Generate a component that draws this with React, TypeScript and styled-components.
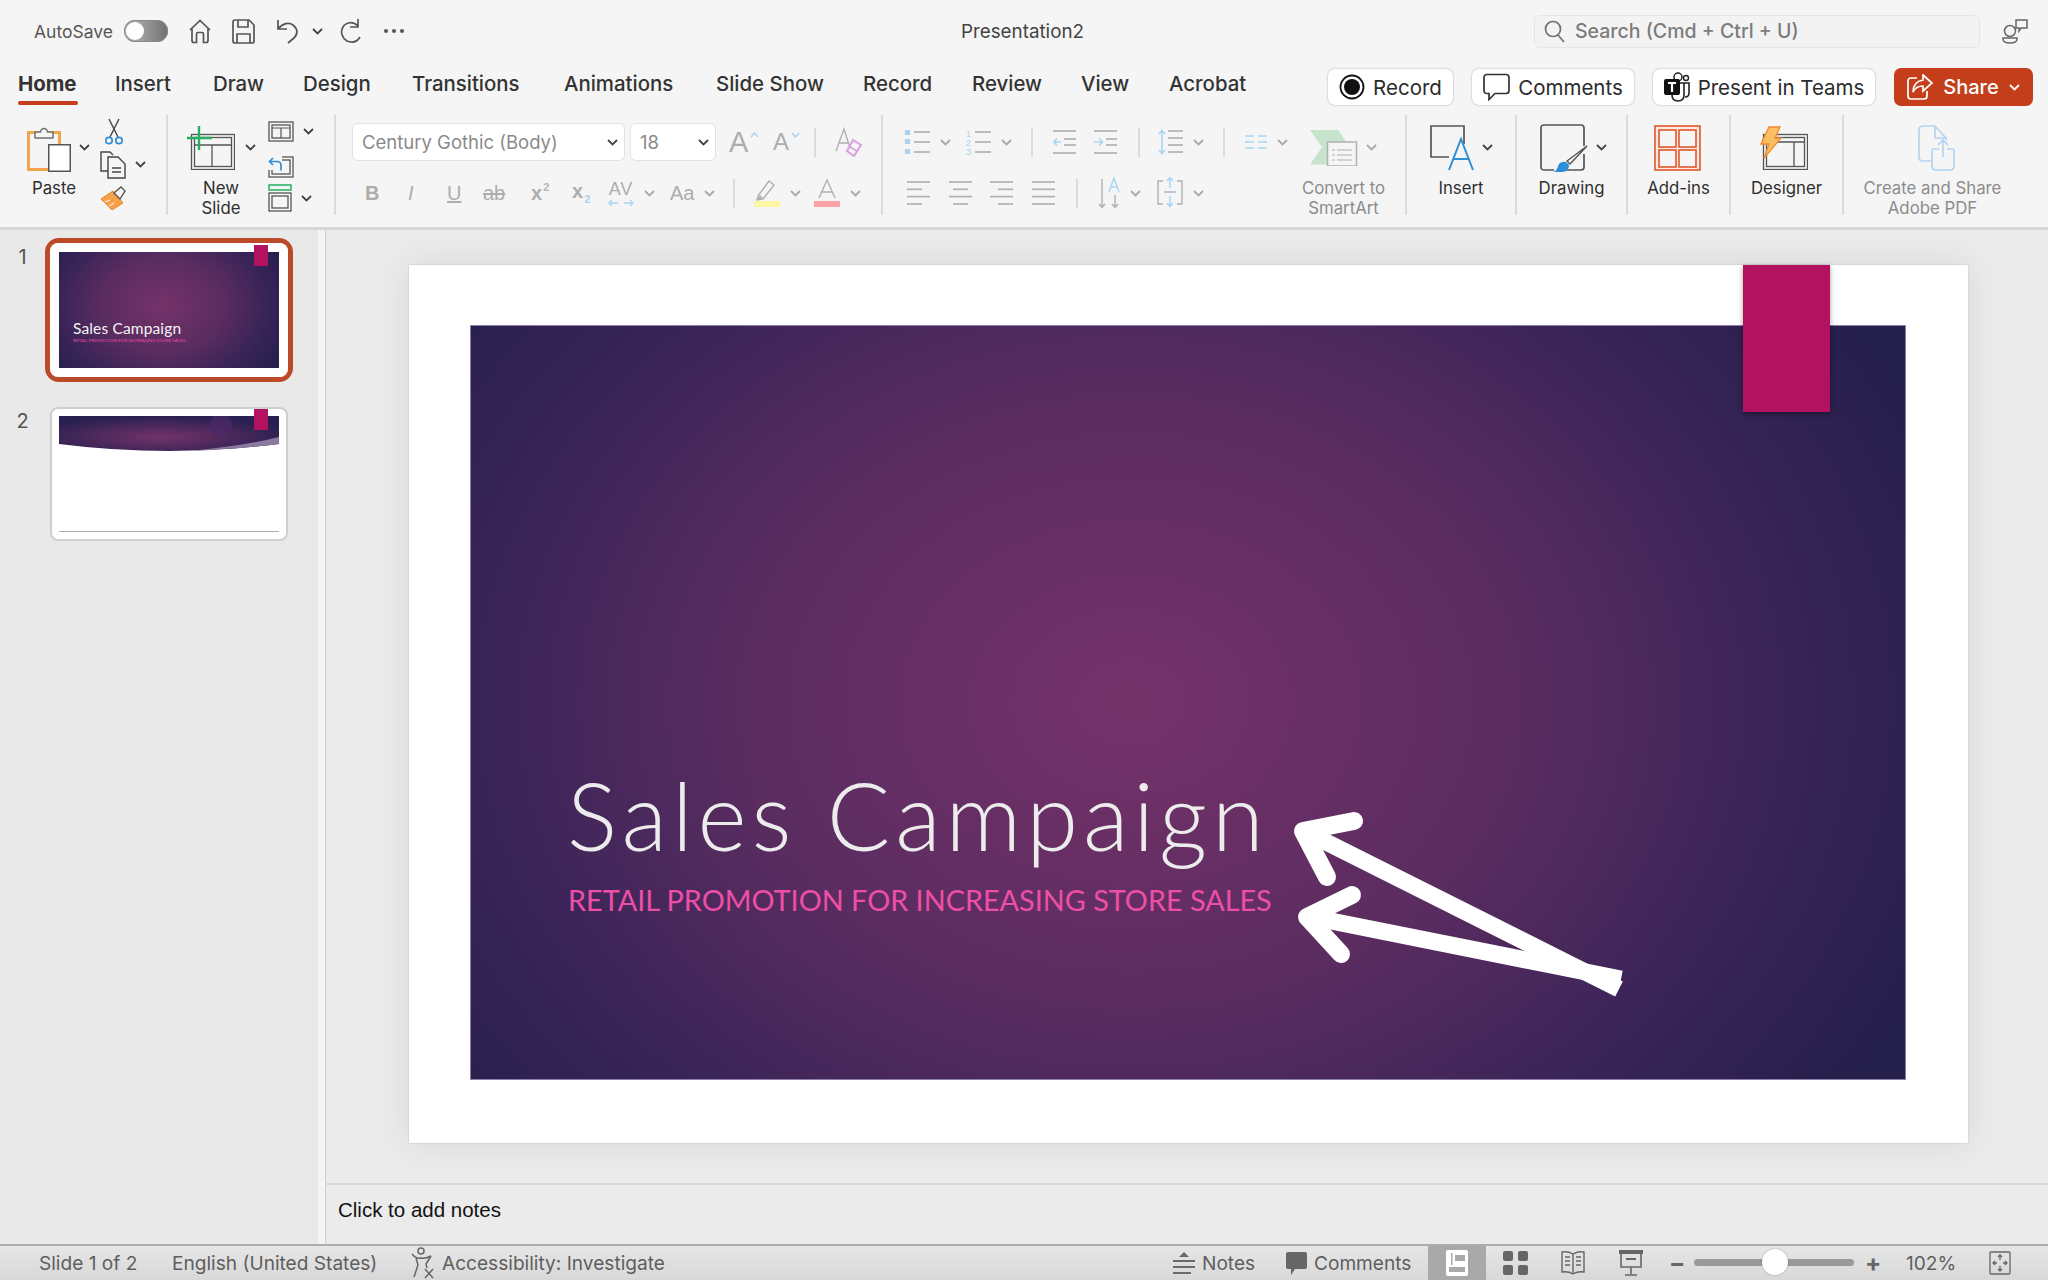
import type { ReactNode } from "react";
import styled, { createGlobalStyle } from "styled-components";

const GlobalStyle = createGlobalStyle`
  html, body { margin: 0; padding: 0; background: #f5f5f5; overflow: hidden; }
  * { box-sizing: border-box; }
`;

const Page = styled.div`
  width: 2048px;
  height: 1280px;
  display: flex;
  flex-direction: column;
  font-family: Inter, "Liberation Sans", sans-serif;
  color: #333;
  background: #f5f5f5;
`;

/* ---------- title bar ---------- */
const TitleBar = styled.div`
  height: 62px;
  display: flex;
  align-items: center;
  padding-left: 34px;
  position: relative;
`;
const AutoSave = styled.span`
  font-size: 17.5px;
  color: #555;
  width: 90px;
`;
const Toggle = styled.span`
  width: 44px;
  height: 22px;
  border-radius: 11px;
  background: linear-gradient(90deg, #bdbdbd, #707070);
  padding: 2px;
  margin-right: 20px;
  box-shadow: inset 0 0 0 1px #8a8a8a;
  display: flex;
`;
const Knob = styled.span`
  width: 18px;
  height: 18px;
  border-radius: 50%;
  background: #fff;
`;
const QuickSlot = styled.span<{ $w: number }>`
  width: ${(p) => p.$w}px;
  display: flex;
  align-items: center;
`;
const DocName = styled.div`
  position: absolute;
  left: 961px;
  top: 21px;
  font-size: 18.8px;
  line-height: 22px;
  color: #444;
`;
const Search = styled.div`
  margin-left: auto;
  width: 446px;
  height: 33px;
  border: 1px solid #e6e6e6;
  border-radius: 6px;
  background: #f3f3f3;
  display: flex;
  align-items: center;
  gap: 10px;
  padding-left: 9px;
  font-size: 19.5px;
  font-weight: 500;
  color: #7c7c7c;
`;
const PeopleSlot = styled.span`
  width: 68px;
  padding-left: 22px;
  display: flex;
`;

/* ---------- tabs ---------- */
const TabBar = styled.div`
  height: 48px;
  display: flex;
  align-items: flex-start;
  padding: 6px 15px 0 18px;
`;
const Tab = styled.div<{ $w: number; $active?: boolean }>`
  width: ${(p) => p.$w}px;
  height: 33px;
  font-size: 20.4px;
  line-height: 32px;
  font-weight: ${(p) => (p.$active ? 700 : 500)};
  color: #333;
  white-space: nowrap;
  position: relative;
  &::after {
    content: "";
    display: ${(p) => (p.$active ? "block" : "none")};
    position: absolute;
    left: 0;
    top: 33px;
    width: 60px;
    height: 4px;
    border-radius: 2px;
    background: #c43e1c;
  }
`;
const TabActions = styled.div`
  margin-left: auto;
  display: flex;
  align-items: center;
  gap: 19px;
`;
const Pill = styled.div<{ $w: number }>`
  width: ${(p) => p.$w}px;
  height: 36px;
  background: #fff;
  border-radius: 7px;
  box-shadow: 0 0 2px rgba(0, 0, 0, 0.35);
  display: flex;
  align-items: center;
  justify-content: center;
  gap: 8px;
  font-size: 20.5px;
  color: #2b2b2b;
`;
const ShareButton = styled.div`
  width: 139px;
  height: 38px;
  background: #c43e1c;
  border-radius: 7px;
  color: #fff;
  display: flex;
  align-items: center;
  justify-content: center;
  gap: 10px;
  font-size: 20px;
  font-weight: 500;
`;

/* ---------- ribbon ---------- */
const Ribbon = styled.div`
  height: 120px;
  display: flex;
  align-items: flex-start;
  padding-top: 5px;
  border-bottom: 3px solid #d6d6d6;
`;
const Group = styled.div<{ $w: number; $last?: boolean }>`
  width: ${(p) => p.$w}px;
  height: 100px;
  display: flex;
  flex-shrink: 0;
  border-right: ${(p) => (p.$last ? "none" : "2px solid #dcdcdc")};
`;
const BigTool = styled.div<{ $w?: number }>`
  width: ${(p) => (p.$w ? `${p.$w}px` : "100%")};
  flex-shrink: 0;
  display: flex;
  flex-direction: column;
  padding-top: 1px;
`;
const BigIcon = styled.div<{ $pl: number; $gap?: number }>`
  height: 63px;
  flex-shrink: 0;
  padding-left: ${(p) => p.$pl}px;
  display: flex;
  align-items: center;
  gap: ${(p) => p.$gap ?? 8}px;
`;
const Label = styled.div<{ $dim?: boolean; $ml?: number }>`
  font-size: 16.8px;
  line-height: 19.5px;
  text-align: center;
  white-space: nowrap;
  flex-shrink: 0;
  margin-left: ${(p) => p.$ml ?? 0}px;
  color: ${(p) => (p.$dim ? "#8c8c8c" : "#2f2f2f")};
`;
const SmallCol = styled.div<{ $w: number }>`
  width: ${(p) => p.$w}px;
  flex-shrink: 0;
  display: flex;
  flex-direction: column;
`;
const SmallItem = styled.div<{ $pl?: number }>`
  height: 35px;
  display: flex;
  align-items: center;
  gap: 9px;
  padding-left: ${(p) => p.$pl ?? 0}px;
`;
const Rows = styled.div<{ $w?: number }>`
  width: ${(p) => (p.$w ? `${p.$w}px` : "auto")};
  flex-shrink: 0;
  display: flex;
  flex-direction: column;
  gap: 13px;
  padding-top: 8px;
`;
const Row = styled.div<{ $pl: number }>`
  height: 38px;
  display: flex;
  align-items: center;
  padding-left: ${(p) => p.$pl}px;
`;
const Slot = styled.div<{ $w: number; $ml?: number }>`
  width: ${(p) => p.$w}px;
  margin-left: ${(p) => p.$ml ?? 0}px;
  flex-shrink: 0;
  display: flex;
  align-items: center;
  gap: 10px;
`;
const Sep = styled.span<{ $mr: number }>`
  width: 2px;
  height: 29px;
  background: #dcdcdc;
  margin-right: ${(p) => p.$mr}px;
  flex-shrink: 0;
`;
const Select = styled.div<{ $w: number; $ml?: number }>`
  width: ${(p) => p.$w}px;
  height: 38px;
  flex-shrink: 0;
  margin-left: ${(p) => p.$ml ?? 0}px;
  background: #fff;
  border: 1px solid #e2e2e2;
  border-radius: 6px;
  display: flex;
  align-items: center;
  justify-content: space-between;
  padding: 0 6px 0 9px;
  font-size: 18.5px;
  color: #8a8a8a;
`;
const Glyph = styled.span<{ $size?: number; $bold?: boolean; $italic?: boolean; $line?: string }>`
  font-family: "Liberation Sans", sans-serif;
  font-size: ${(p) => p.$size ?? 20}px;
  font-weight: ${(p) => (p.$bold ? 700 : 400)};
  font-style: ${(p) => (p.$italic ? "italic" : "normal")};
  text-decoration: ${(p) => p.$line ?? "none"};
  color: #adadad;
  line-height: 1.2;
  white-space: nowrap;
`;
const Small = styled.span<{ $blue?: boolean; $up?: boolean }>`
  font-size: 11px;
  color: ${(p) => (p.$blue ? "#a8d4f0" : "#b4b4b4")};
  vertical-align: ${(p) => (p.$up ? "9px" : "-5px")};
  margin-left: 1px;
`;
const GrowBox = styled.span`
  display: flex;
  align-items: center;
  gap: 2px;
`;
const GrowChev = styled.span`
  display: flex;
  margin-top: -14px;
`;
const SpacingBox = styled.span`
  display: flex;
  flex-direction: column;
  align-items: center;
  gap: 1px;
`;
const SpacingText = styled(Glyph)`
  font-size: 18px;
  line-height: 18px;
  letter-spacing: 1px;
`;

const ChevSvg = styled.svg<{ $dim?: boolean; $light?: boolean }>`
  width: 11px;
  height: 7px;
  flex-shrink: 0;
  fill: none;
  stroke: ${(p) => (p.$light ? "#fff" : p.$dim ? "#a9a9a9" : "#444")};
  stroke-width: 1.8;
`;
const Chev = ({ dim, light }: { dim?: boolean; light?: boolean }) => (
  <ChevSvg viewBox="0 0 11 7" $dim={dim} $light={light}>
    <path d="M1 1l4.5 4.5L10 1" />
  </ChevSvg>
);

const Ic = styled.svg<{ $w: number; $h: number }>`
  width: ${(p) => p.$w}px;
  height: ${(p) => p.$h}px;
  flex-shrink: 0;
  fill: none;
  display: block;
`;
const icon = (w: number, h: number, body: ReactNode) => (
  <Ic $w={w} $h={h} viewBox={`0 0 ${w} ${h}`}>
    {body}
  </Ic>
);

const GREY = "#b0b0b0";
const BLUE = "#a8d4f0";

const HomeIcon = () =>
  icon(
    24,
    25,
    <path d="M2 11 12 1.5 22 11M4 9v12.5q0 2 2 2h2.5V15q0-1.5 1.5-1.5h4q1.5 0 1.5 1.5v8.5H18q2 0 2-2V9" stroke="#555" strokeWidth="1.7" />,
  );
const SaveIcon = () =>
  icon(
    23,
    25,
    <g stroke="#555" strokeWidth="1.7">
      <path d="M3 1h14l5 5v16q0 2-2 2H3q-2 0-2-2V3q0-2 2-2z" />
      <path d="M6 1v7h10V1M5 24v-9h13v9" />
    </g>,
  );
const UndoIcon = () =>
  icon(
    24,
    26,
    <path d="M2 2v9h9M2 11c5-6 11-7 15-4 5 4 5 9 1 13l-6 5" stroke="#555" strokeWidth="1.7" />,
  );
const RedoIcon = () =>
  icon(
    24,
    26,
    <path d="M19 1v8h-8M19 8C14 3 7 4 4 9c-3 5-1 11 4 14 5 2 10 1 13-4" stroke="#555" strokeWidth="1.7" />,
  );
const DotsIcon = () =>
  icon(
    20,
    4,
    <g fill="#555">
      <circle cx="2" cy="2" r="2" />
      <circle cx="10" cy="2" r="2" />
      <circle cx="18" cy="2" r="2" />
    </g>,
  );
const SearchIcon = () =>
  icon(
    21,
    23,
    <g stroke="#707070" strokeWidth="1.7">
      <circle cx="9" cy="9" r="7.5" />
      <path d="M14 15l6 7" />
    </g>,
  );
const PeopleIcon = () =>
  icon(
    27,
    26,
    <g stroke="#666" strokeWidth="1.5">
      <circle cx="8" cy="13" r="5.5" />
      <path d="M1 20h14v1q0 4-7 4t-7-4z" />
      <path d="M14 2h11v8h-6l-2 3v-3h-3z" />
    </g>,
  );
const RecordIcon = () =>
  icon(
    26,
    26,
    <g>
      <circle cx="13" cy="13" r="11.5" stroke="#111" strokeWidth="1.8" />
      <circle cx="13" cy="13" r="8" fill="#111" />
    </g>,
  );
const CommentIcon = () =>
  icon(
    27,
    28,
    <path d="M4 1.5h19q3 0 3 3v13q0 3-3 3H12l-6 6v-6H4q-3 0-3-3v-13q0-3 3-3z" stroke="#333" strokeWidth="1.7" />,
  );
const TeamsIcon = () =>
  icon(
    26,
    30,
    <g>
      <circle cx="14" cy="5" r="4" stroke="#222" strokeWidth="1.5" />
      <circle cx="22" cy="6" r="2.5" stroke="#222" strokeWidth="1.4" />
      <path d="M16 11h9v10q0 4-4 4M8 20v3q0 6 6 6t6-6V11" stroke="#222" strokeWidth="1.6" />
      <rect x="0" y="7" width="16" height="16" rx="2" fill="#111" />
      <path d="M4 11h8M8 11v9" stroke="#fff" strokeWidth="2.2" />
    </g>,
  );
const ShareIcon = () =>
  icon(
    26,
    26,
    <g stroke="#fff" strokeWidth="1.7">
      <path d="M10 4H4q-3 0-3 3v15q0 3 3 3h13q3 0 3-3v-5" />
      <path d="M16 1l9 8-9 8v-5c-5 0-8 2-10 6 0-7 4-11 10-12z" />
    </g>,
  );
const PasteIcon = () =>
  icon(
    44,
    48,
    <g>
      <rect x="1.5" y="8.5" width="31" height="37" fill="#f5f5f5" stroke="#f2a54a" strokeWidth="3" />
      <path d="M8 14V8h5.5a3.5 3.5 0 0 1 7 0H26v6z" fill="#f5f5f5" stroke="#707070" strokeWidth="1.5" />
      <rect x="21.75" y="20.75" width="21.5" height="26.5" fill="#fff" stroke="#555" strokeWidth="1.5" />
    </g>,
  );
const ScissorsIcon = () =>
  icon(
    18,
    27,
    <g>
      <path d="M4 1l9 18M14 1 5 19" stroke="#444" strokeWidth="1.4" />
      <circle cx="4" cy="22.5" r="3.2" stroke="#2f8fd6" strokeWidth="1.7" />
      <circle cx="14" cy="22.5" r="3.2" stroke="#2f8fd6" strokeWidth="1.7" />
    </g>,
  );
const CopyIcon = () =>
  icon(
    26,
    28,
    <g stroke="#444" strokeWidth="1.4">
      <path d="M10 20H1V1h9l3 3" />
      <path d="M8 6h10l7 7v14H8z" fill="#f5f5f5" />
      <path d="M12 17h9M12 21h9" />
    </g>,
  );
const BrushIcon = () =>
  icon(
    26,
    25,
    <g>
      <path d="M1 13 13 5l10 12-11 7z" fill="#f7a24b" stroke="#e8842a" strokeWidth="1" />
      <path d="M5 16l5-2M9 20l5-3" stroke="#fff" strokeWidth="1" />
      <path d="M14 7l7-6 4 4-5 8z" fill="#f5f5f5" stroke="#555" strokeWidth="1.4" />
    </g>,
  );
const SlideFrame = (x: number, y: number, w: number, h: number) => (
  <g stroke="#555" strokeWidth="1.3">
    <rect x={x} y={y} width={w} height={h} fill="#f5f5f5" />
    <rect x={x + 3} y={y + 3} width={w - 6} height={h - 6} fill="#f5f5f5" />
  </g>
);
const NewSlideIcon = () =>
  icon(
    48,
    44,
    <g>
      {SlideFrame(4.5, 8.5, 43, 35)}
      <path d="M8 19h36M25 19v21" stroke="#555" strokeWidth="1.3" />
      <path d="M0 12h25M12 0v24" stroke="#27ae60" strokeWidth="2.4" />
    </g>,
  );
const LayoutIcon = () =>
  icon(
    26,
    21,
    <g>
      {SlideFrame(1, 1, 24, 19)}
      <path d="M4 7h18M13 7v10" stroke="#555" strokeWidth="1.2" />
    </g>,
  );
const ResetIcon = () =>
  icon(
    26,
    26,
    <g>
      {SlideFrame(1, 5, 24, 20)}
      <rect x="0" y="0" width="14" height="18" fill="#f5f5f5" />
      <path d="M5 6 1.5 9.5 5 13M2 9.5h7q4 0 4 4v5" stroke="#2f8fd6" strokeWidth="1.7" />
    </g>,
  );
const SectionIcon = () =>
  icon(
    24,
    28,
    <g>
      <rect x="1" y="1" width="22" height="5" stroke="#27ae60" strokeWidth="1.5" />
      {SlideFrame(1, 9, 22, 18)}
    </g>,
  );
const GrowIcon = ({ up, size }: { up: boolean; size: number }) => (
  <GrowBox>
    <Glyph $size={size}>A</Glyph>
    <GrowChev>
      {icon(
        9,
        6,
        <path d={up ? "M1 5l3.5-4L8 5" : "M1 1l3.5 4L8 1"} stroke={BLUE} strokeWidth="1.5" />,
      )}
    </GrowChev>
  </GrowBox>
);
const ClearIcon = () =>
  icon(
    28,
    30,
    <g>
      <path d="M2 24 10 2l7 22M5 16h9" stroke={GREY} strokeWidth="1.4" />
      <path d="M19 13l8 5-7 11-7-5z" fill="#f5f5f5" stroke="#d6a0dc" strokeWidth="2" />
      <path d="M16 20l7 4" stroke="#d6a0dc" strokeWidth="1.5" />
    </g>,
  );
const HighlightIcon = () =>
  icon(
    26,
    28,
    <g>
      <path d="M4 17 15 2l5 4L9 20l-6 1z" fill="#f5f5f5" stroke={GREY} strokeWidth="1.4" />
      <path d="M3 21l3-5 3 3z" fill={GREY} />
      <rect y="22" width="26" height="6" fill="#fbf7a0" />
    </g>,
  );
const FontColorIcon = () =>
  icon(
    26,
    28,
    <g>
      <path d="M5 19 13 1l8 18M8 13h10" stroke={GREY} strokeWidth="1.4" />
      <rect y="22" width="26" height="6" fill="#fba3a8" />
    </g>,
  );
const SpacingArrows = () =>
  icon(
    26,
    8,
    <path d="M1 4h9M4 1 1 4l3 3M16 4h9M22 1l3 3-3 3" stroke={BLUE} strokeWidth="1.3" />,
  );
const ListLines = ({ x, w, rows }: { x: number; w: number; rows: number[] }) => (
  <g stroke={GREY} strokeWidth="1.7">
    {rows.map((y) => (
      <path key={y} d={`M${x} ${y}h${w}`} />
    ))}
  </g>
);
const BulletsIcon = () =>
  icon(
    25,
    26,
    <g>
      <g fill={BLUE}>
        <rect y="1" width="5" height="5" />
        <rect y="10" width="5" height="5" />
        <rect y="20" width="5" height="5" />
      </g>
      <ListLines x={9} w={16} rows={[3, 13, 23]} />
    </g>,
  );
const NumberingIcon = () =>
  icon(
    25,
    26,
    <g>
      <g fill={BLUE} fontSize="9" fontFamily="Liberation Sans">
        <text x="0" y="8">1</text>
        <text x="0" y="17">2</text>
        <text x="0" y="26">3</text>
      </g>
      <ListLines x={9} w={16} rows={[3, 13, 23]} />
    </g>,
  );
const OutdentIcon = () =>
  icon(
    23,
    24,
    <g>
      <ListLines x={0} w={23} rows={[1, 23]} />
      <ListLines x={11} w={12} rows={[9, 15]} />
      <path d="M8 12H1M4 8.5 .8 12 4 15.5" stroke={BLUE} strokeWidth="1.5" />
    </g>,
  );
const IndentIcon = () =>
  icon(
    23,
    24,
    <g>
      <ListLines x={0} w={23} rows={[1, 23]} />
      <ListLines x={12} w={11} rows={[9, 15]} />
      <path d="M0 12h8M5 8.5 8.5 12 5 15.5" stroke={BLUE} strokeWidth="1.5" />
    </g>,
  );
const LineSpacingIcon = () =>
  icon(
    25,
    26,
    <g>
      <ListLines x={10} w={15} rows={[2, 9, 16, 23]} />
      <path d="M4 2v22M1 5l3-3.5L7 5M1 21l3 3.5L7 21" stroke={BLUE} strokeWidth="1.5" />
    </g>,
  );
const ColumnsIcon = () =>
  icon(
    22,
    16,
    <g stroke={BLUE} strokeWidth="1.7">
      <path d="M0 2h9M0 8h9M0 14h9M13 2h9M13 8h9M13 14h9" />
    </g>,
  );
const SmartArtIcon = () =>
  icon(
    48,
    36,
    <g>
      <path d="M0 0h28l12 20-12 20H0l12-20z" transform="scale(1 .86)" fill="#c6e3cc" />
      <rect x="17.5" y="21" width="29" height="24" fill="#f5f5f5" stroke={GREY} strokeWidth="1.5" transform="translate(0 -9)" />
      <path d="M22 20h3M27 20h15M22 25h3M27 25h15M22 30h3M27 30h15" stroke={GREY} strokeWidth="1" />
    </g>,
  );
const AlignIcon = ({ kind }: { kind: "left" | "center" | "right" | "justify" }) => {
  const short = kind === "justify" ? 23 : 15;
  const off = kind === "left" || kind === "justify" ? 0 : kind === "center" ? 4 : 8;
  return icon(
    23,
    24,
    <g stroke={GREY} strokeWidth="1.7">
      <path d="M0 1h23" />
      <path d={`M${off} 8.3h${short}`} />
      <path d="M0 15.6h23" />
      <path d={`M${off} 23h${short}`} />
    </g>,
  );
};
const TextDirIcon = () =>
  icon(
    22,
    32,
    <g>
      <path d="M4 2v28M1 27l3 3.5 3-3.5" stroke={GREY} strokeWidth="1.4" />
      <path d="M17 18v12M14 27l3 3.5 3-3.5" stroke={GREY} strokeWidth="1.4" />
      <path d="M11 15 16 1l5 14M13 10h6" stroke={BLUE} strokeWidth="1.4" />
    </g>,
  );
const AlignTextIcon = () =>
  icon(
    26,
    32,
    <g>
      <path d="M6 4H1v23h5M20 4h5v23h-5" stroke={GREY} strokeWidth="1.4" />
      <path d="M7 15h12" stroke={GREY} strokeWidth="1.4" />
      <path d="M13 1v10M10 4l3-3.5L16 4M13 19v10M10 26l3 3.5 3-3.5" stroke={BLUE} strokeWidth="1.5" />
    </g>,
  );
const InsertIcon = () =>
  icon(
    44,
    46,
    <g>
      <path d="M19 32H1V1h33v18" stroke="#555" strokeWidth="1.7" />
      <path d="M19 45 31 14l12 31M23 34h16" stroke="#2f8fd6" strokeWidth="2" />
    </g>,
  );
const DrawingIcon = () =>
  icon(
    48,
    48,
    <g>
      <path d="M14 46H4q-3 0-3-3V4q0-3 3-3h37q3 0 3 3v18M44 30v13q0 3-3 3H26" stroke="#555" strokeWidth="1.7" />
      <path d="M47 22 27 37l3 3z" fill="#f5f5f5" stroke="#555" strokeWidth="1.4" />
      <path d="M13 48q4-1 5-6 2-5 8-4l3 3q0 6-6 7z" fill="#2f8fd6" />
    </g>,
  );
const AddInsIcon = () =>
  icon(
    47,
    46,
    <g stroke="#e1572c" strokeWidth="1.6">
      <rect x="1" y="1" width="45" height="44" fill="#fbe9e2" />
      <rect x="5" y="5" width="17" height="17" fill="#f5f5f5" />
      <rect x="25" y="5" width="17" height="17" fill="#f5f5f5" />
      <rect x="5" y="25" width="17" height="17" fill="#f5f5f5" />
      <rect x="25" y="25" width="17" height="17" fill="#f5f5f5" />
    </g>,
  );
const DesignerIcon = () =>
  icon(
    48,
    44,
    <g>
      {SlideFrame(3.5, 8.5, 44, 35)}
      <path d="M7 16h37M34 16v24" stroke="#555" strokeWidth="1.3" />
      <path d="M9 1h11l-5 11h6L4 32l5-14H1z" fill="#fbbf63" stroke="#ee8a2c" strokeWidth="1.3" />
    </g>,
  );
const AdobeIcon = () =>
  icon(
    40,
    46,
    <g stroke="#b3d4f3" strokeWidth="1.7">
      <path d="M14 36H6q-4 0-4-4V5q0-4 4-4h12l11 12v2M18 1v12h11" />
      <path d="M22 24h-5q-2 0-2 2v15q0 4 4 4h14q4 0 4-4V26q0-2-2-2h-5M26 32V15M21 20l5-5 5 5" />
    </g>,
  );
const AccessIcon = () =>
  icon(
    24,
    32,
    <g stroke="#666" strokeWidth="1.5">
      <circle cx="10" cy="4" r="3" />
      <path d="M1 7q4 5 9 4 5 1 10-2l-5 8 1 4M5 11l2 7-4 12" />
      <path d="M14 22l8 9M22 22l-8 9" />
    </g>,
  );
const NotesIcon = () =>
  icon(
    22,
    24,
    <g fill="#6a6a6a">
      <path d="M11 1l5 5H6z" />
      <rect y="9" width="22" height="2" />
      <rect y="15" width="22" height="2" />
      <rect y="21" width="18" height="2" />
    </g>,
  );
const CommentFill = () =>
  icon(21, 24, <path d="M2 1h17q2 0 2 2v13q0 2-2 2H9l-4 6v-6H2q-2 0-2-2V3q0-2 2-2z" fill="#666" />);
const NormalViewIcon = () =>
  icon(
    22,
    26,
    <g>
      <rect width="22" height="26" rx="2" fill="#fff" />
      <rect x="9" y="5" width="10" height="6" fill="#a9a9a9" />
      <rect x="3" y="17" width="16" height="5" fill="#a9a9a9" />
      <rect x="5" y="3" width="1.5" height="12" fill="#a9a9a9" />
    </g>,
  );
const SorterIcon = () =>
  icon(
    25,
    24,
    <g fill="#666">
      <rect width="10" height="10" rx="2" />
      <rect x="15" width="10" height="10" rx="2" />
      <rect y="14" width="10" height="10" rx="2" />
      <rect x="15" y="14" width="10" height="10" rx="2" />
    </g>,
  );
const ReadingIcon = () =>
  icon(
    24,
    24,
    <g stroke="#666" strokeWidth="1.4">
      <path d="M12 3q-5-3-11-2v20q6-1 11 2 5-3 11-2V1q-6-1-11 2zM12 3v20" />
      <path d="M4 6h5M4 10h5M4 14h5M15 6h5M15 10h5M15 14h5" />
    </g>,
  );
const PresentIcon = () =>
  icon(
    24,
    26,
    <g>
      <rect width="24" height="4" fill="#666" />
      <path d="M2 3v14h20V3M12 17v7M6 25h12" stroke="#666" strokeWidth="1.6" />
      <rect x="7" y="8" width="10" height="2" fill="#666" />
    </g>,
  );
const FitIcon = () =>
  icon(
    22,
    24,
    <g stroke="#666" strokeWidth="1.3">
      <rect x="1" y="1" width="20" height="22" rx="1" />
      <path d="M11 4v5M9 6l2-2 2 2M11 20v-5M9 18l2 2 2-2M4 12h4M6 10l-2 2 2 2M18 12h-4M16 10l2 2-2 2" />
    </g>,
  );

/* ---------- main ---------- */
const Main = styled.div`
  flex: 1;
  min-height: 0;
  display: flex;
  background: #ebebeb;
`;
const Sidebar = styled.div`
  width: 325px;
  flex-shrink: 0;
  background: #e9e9e9;
  border-right: 7px solid #f4f4f4;
  box-shadow: 1px 0 0 #cfcfcf;
  padding-top: 8px;
  display: flex;
  flex-direction: column;
  gap: 20px;
`;
const ThumbRow = styled.div`
  display: flex;
`;
const ThumbNum = styled.div`
  width: 45px;
  padding-top: 7px;
  text-align: center;
  font-size: 20px;
  line-height: 24px;
  color: #555;
`;
const ThumbFrame = styled.div<{ $active?: boolean }>`
  width: 248px;
  height: 144px;
  border: 5px solid ${(p) => (p.$active ? "#bb4a29" : "transparent")};
  border-radius: 14px;
`;
const ThumbCard = styled.div<{ $active?: boolean }>`
  height: 100%;
  position: relative;
  background: #fff;
  border-radius: 8px;
  border: ${(p) => (p.$active ? "none" : "2px solid #cfcfcf")};
  padding: ${(p) => (p.$active ? "9px" : "7px")};
  display: flex;
  flex-direction: column;
  justify-content: space-between;
`;
const ThumbTag = styled.div<{ $active?: boolean }>`
  position: absolute;
  left: ${(p) => (p.$active ? 204 : 202)}px;
  top: ${(p) => (p.$active ? 2 : 0)}px;
  width: 14px;
  height: 21px;
  background: #b21260;
`;
const ThumbPicture = styled.div`
  height: 100%;
  background: radial-gradient(ellipse 62% 90% at 47% 46%, #75326a 0%, #5a2c60 45%, #3a2458 75%, #251f4c 100%);
  padding: 0 0 25px 14px;
  display: flex;
  flex-direction: column;
  justify-content: flex-end;
`;
const ThumbTitle = styled.div`
  font-family: Lato, "Liberation Sans", sans-serif;
  font-weight: 400;
  font-size: 15.5px;
  line-height: 18px;
  letter-spacing: 0.15px;
  color: #f4f4f4;
  white-space: nowrap;
`;
const ThumbSub = styled.div`
  font-family: Lato, "Liberation Sans", sans-serif;
  font-size: 4.6px;
  line-height: 6px;
  color: #e34da6;
  white-space: nowrap;
`;
const ThumbRule = styled.div`
  height: 1px;
  background: #b5a8b5;
`;
const Work = styled.div`
  flex: 1;
  min-width: 0;
  display: flex;
  flex-direction: column;
`;
const Stage = styled.div`
  flex: 1;
  padding: 35px 0 0 84px;
`;
const SlideSheet = styled.div`
  width: 1559px;
  height: 878px;
  position: relative;
  background: #fff;
  padding: 60px 62px 63px 61px;
  box-shadow: 0 0 34px rgba(0, 0, 0, 0.09), 0 0 1px rgba(0, 0, 0, 0.3);
`;
const SlidePicture = styled.div`
  height: 100%;
  background: radial-gradient(ellipse 60% 90% at 46% 50%, #75326a 0%, #5a2c60 45%, #3a2458 75%, #251f4c 100%);
  box-shadow: inset 0 0 0 1px #8d7fa5;
  padding: 0 0 162px 97px;
  display: flex;
  flex-direction: column;
  justify-content: flex-end;
`;
const SlideTitle = styled.div`
  font-family: Lato, "Liberation Sans", sans-serif;
  font-weight: 300;
  font-size: 94px;
  line-height: 96px;
  letter-spacing: 4.9px;
  color: #ececec;
  white-space: nowrap;
`;
const SlideSubtitle = styled.div`
  font-family: Lato, "Liberation Sans", sans-serif;
  font-weight: 400;
  font-size: 28.8px;
  line-height: 36px;
  margin: 19px 0 0 1px;
  color: #ee4fa6;
  white-space: nowrap;
`;
const SlideTag = styled.div`
  position: absolute;
  left: 1334px;
  top: 0;
  width: 87px;
  height: 147px;
  background: #b21260;
  box-shadow: 0 2px 5px rgba(0, 0, 0, 0.4);
`;
const Arrows = styled.svg`
  position: absolute;
  inset: 0;
  width: 100%;
  height: 100%;
  pointer-events: none;
`;
const NotesBar = styled.div`
  height: 61px;
  flex-shrink: 0;
  border-top: 2px solid #d9d9d9;
  padding: 0 0 10px 13px;
  display: flex;
  align-items: center;
  font-family: "Liberation Sans", sans-serif;
  font-size: 20.5px;
  color: #111;
`;

/* ---------- status bar ---------- */
const StatusBar = styled.div`
  height: 36px;
  flex-shrink: 0;
  display: flex;
  align-items: center;
  border-top: 2px solid #adadad;
  background: linear-gradient(#e6e6e6, #d8d8d8);
  font-size: 19.1px;
  color: #5e5e5e;
  padding-bottom: 1px;
`;
const StatusText = styled.span<{ $w: number }>`
  width: ${(p) => p.$w}px;
  flex-shrink: 0;
  white-space: nowrap;
  display: flex;
  align-items: center;
  gap: 7px;
`;
const StatusSpacer = styled.span<{ $w: number }>`
  width: ${(p) => p.$w}px;
  flex-shrink: 0;
`;
const ViewButton = styled.span<{ $w: number; $active?: boolean }>`
  width: ${(p) => p.$w}px;
  height: 34px;
  flex-shrink: 0;
  display: flex;
  align-items: center;
  justify-content: center;
  background: ${(p) => (p.$active ? "#a9a9a9" : "transparent")};
`;
const ZoomTrack = styled.div`
  width: 160px;
  height: 7px;
  margin: 0 11px;
  border-radius: 4px;
  background: #9a9a9a;
  position: relative;
`;
const ZoomThumb = styled.div`
  position: absolute;
  left: 68px;
  top: -10px;
  width: 26px;
  height: 26px;
  border-radius: 50%;
  background: #fff;
  box-shadow: 0 0 2px rgba(0, 0, 0, 0.3);
`;
const ZoomSign = styled.span`
  width: 14px;
  text-align: center;
  font-size: 24px;
  font-weight: 700;
  line-height: 24px;
  color: #666;
`;

const tabs = [
  { name: "Home", w: 97, active: true },
  { name: "Insert", w: 98 },
  { name: "Draw", w: 90 },
  { name: "Design", w: 109 },
  { name: "Transitions", w: 152 },
  { name: "Animations", w: 152 },
  { name: "Slide Show", w: 147 },
  { name: "Record", w: 109 },
  { name: "Review", w: 109 },
  { name: "View", w: 88 },
  { name: "Acrobat", w: 77 },
];

export default function App() {
  return (
    <Page>
      <GlobalStyle />
      <TitleBar>
        <AutoSave>AutoSave</AutoSave>
        <Toggle>
          <Knob />
        </Toggle>
        <QuickSlot $w={44}>
          <HomeIcon />
        </QuickSlot>
        <QuickSlot $w={44}>
          <SaveIcon />
        </QuickSlot>
        <QuickSlot $w={36}>
          <UndoIcon />
        </QuickSlot>
        <QuickSlot $w={27}>
          <Chev />
        </QuickSlot>
        <QuickSlot $w={45}>
          <RedoIcon />
        </QuickSlot>
        <QuickSlot $w={20}>
          <DotsIcon />
        </QuickSlot>
        <DocName>Presentation2</DocName>
        <Search>
          <SearchIcon />
          Search (Cmd + Ctrl + U)
        </Search>
        <PeopleSlot>
          <PeopleIcon />
        </PeopleSlot>
      </TitleBar>

      <TabBar>
        {tabs.map((t) => (
          <Tab key={t.name} $w={t.w} $active={t.active}>
            {t.name}
          </Tab>
        ))}
        <TabActions>
          <Pill $w={125}>
            <RecordIcon />
            Record
          </Pill>
          <Pill $w={162}>
            <CommentIcon />
            Comments
          </Pill>
          <Pill $w={222}>
            <TeamsIcon />
            Present in Teams
          </Pill>
          <ShareButton>
            <ShareIcon />
            Share
            <Chev light />
          </ShareButton>
        </TabActions>
      </TabBar>

      <Ribbon>
        <Group $w={168}>
          <BigTool $w={100}>
            <BigIcon $pl={27}>
              <PasteIcon />
              <Chev />
            </BigIcon>
            <Label $ml={8}>Paste</Label>
          </BigTool>
          <SmallCol $w={60}>
            <SmallItem $pl={5}>
              <ScissorsIcon />
            </SmallItem>
            <SmallItem>
              <CopyIcon />
              <Chev />
            </SmallItem>
            <SmallItem>
              <BrushIcon />
            </SmallItem>
          </SmallCol>
        </Group>

        <Group $w={168}>
          <BigTool $w={100}>
            <BigIcon $pl={19} $gap={10}>
              <NewSlideIcon />
              <Chev />
            </BigIcon>
            <Label $ml={6}>
              New
              <br />
              Slide
            </Label>
          </BigTool>
          <SmallCol $w={60}>
            <SmallItem>
              <LayoutIcon />
              <Chev />
            </SmallItem>
            <SmallItem>
              <ResetIcon />
            </SmallItem>
            <SmallItem>
              <SectionIcon />
              <Chev />
            </SmallItem>
          </SmallCol>
        </Group>

        <Group $w={547}>
          <Rows>
            <Row $pl={16}>
              <Select $w={273}>
                Century Gothic (Body)
                <Chev />
              </Select>
              <Select $w={86} $ml={5}>
                18
                <Chev />
              </Select>
              <Slot $w={44} $ml={13}>
                <GrowIcon up size={29} />
              </Slot>
              <Slot $w={41}>
                <GrowIcon up={false} size={24} />
              </Slot>
              <Sep $mr={18} />
              <ClearIcon />
            </Row>
            <Row $pl={29}>
              <Slot $w={43}>
                <Glyph $bold>B</Glyph>
              </Slot>
              <Slot $w={39}>
                <Glyph $italic>I</Glyph>
              </Slot>
              <Slot $w={36}>
                <Glyph $line="underline">U</Glyph>
              </Slot>
              <Slot $w={48}>
                <Glyph $line="line-through">ab</Glyph>
              </Slot>
              <Slot $w={41}>
                <Glyph $bold>
                  x<Small $up>2</Small>
                </Glyph>
              </Slot>
              <Slot $w={36}>
                <Glyph $bold>
                  x<Small $blue>2</Small>
                </Glyph>
              </Slot>
              <Slot $w={62}>
                <SpacingBox>
                  <SpacingText>AV</SpacingText>
                  <SpacingArrows />
                </SpacingBox>
                <Chev dim />
              </Slot>
              <Slot $w={63}>
                <Glyph $size={20}>Aa</Glyph>
                <Chev dim />
              </Slot>
              <Sep $mr={19} />
              <Slot $w={60}>
                <HighlightIcon />
                <Chev dim />
              </Slot>
              <Slot $w={54}>
                <FontColorIcon />
                <Chev dim />
              </Slot>
            </Row>
          </Rows>
        </Group>

        <Group $w={524}>
          <Rows $w={408}>
            <Row $pl={22}>
              <Slot $w={61}>
                <BulletsIcon />
                <Chev dim />
              </Slot>
              <Slot $w={65}>
                <NumberingIcon />
                <Chev dim />
              </Slot>
              <Sep $mr={20} />
              <Slot $w={41}>
                <OutdentIcon />
              </Slot>
              <Slot $w={44}>
                <IndentIcon />
              </Slot>
              <Sep $mr={18} />
              <Slot $w={65}>
                <LineSpacingIcon />
                <Chev dim />
              </Slot>
              <Sep $mr={20} />
              <Slot $w={50}>
                <ColumnsIcon />
                <Chev dim />
              </Slot>
            </Row>
            <Row $pl={24}>
              <Slot $w={42}>
                <AlignIcon kind="left" />
              </Slot>
              <Slot $w={41}>
                <AlignIcon kind="center" />
              </Slot>
              <Slot $w={42}>
                <AlignIcon kind="right" />
              </Slot>
              <Slot $w={44}>
                <AlignIcon kind="justify" />
              </Slot>
              <Sep $mr={20} />
              <Slot $w={59}>
                <TextDirIcon />
                <Chev dim />
              </Slot>
              <Slot $w={60}>
                <AlignTextIcon />
                <Chev dim />
              </Slot>
            </Row>
          </Rows>
          <BigTool $w={95}>
            <BigIcon $pl={19}>
              <SmartArtIcon />
              <Chev dim />
            </BigIcon>
            <Label $dim $ml={10}>
              Convert to
              <br />
              SmartArt
            </Label>
          </BigTool>
        </Group>

        <Group $w={110}>
          <BigTool>
            <BigIcon $pl={23}>
              <InsertIcon />
              <Chev />
            </BigIcon>
            <Label>Insert</Label>
          </BigTool>
        </Group>
        <Group $w={111}>
          <BigTool>
            <BigIcon $pl={23}>
              <DrawingIcon />
              <Chev />
            </BigIcon>
            <Label>Drawing</Label>
          </BigTool>
        </Group>
        <Group $w={103}>
          <BigTool>
            <BigIcon $pl={26}>
              <AddInsIcon />
            </BigIcon>
            <Label>Add-ins</Label>
          </BigTool>
        </Group>
        <Group $w={113}>
          <BigTool>
            <BigIcon $pl={29}>
              <DesignerIcon />
            </BigIcon>
            <Label>Designer</Label>
          </BigTool>
        </Group>
        <Group $w={177} $last>
          <BigTool>
            <BigIcon $pl={73}>
              <AdobeIcon />
            </BigIcon>
            <Label $dim>
              Create and Share
              <br />
              Adobe PDF
            </Label>
          </BigTool>
        </Group>
      </Ribbon>

      <Main>
        <Sidebar>
          <ThumbRow>
            <ThumbNum>1</ThumbNum>
            <ThumbFrame $active>
              <ThumbCard $active>
                <ThumbPicture>
                  <ThumbTitle>Sales Campaign</ThumbTitle>
                  <ThumbSub>RETAIL PROMOTION FOR INCREASING STORE SALES</ThumbSub>
                </ThumbPicture>
                <ThumbTag $active />
              </ThumbCard>
            </ThumbFrame>
          </ThumbRow>
          <ThumbRow>
            <ThumbNum>2</ThumbNum>
            <ThumbFrame>
              <ThumbCard>
                <svg width="220" height="36" viewBox="0 0 220 36">
                  <defs>
                    <radialGradient id="band" cx="46%" cy="60%" r="60%">
                      <stop offset="0" stopColor="#73326a" />
                      <stop offset="1" stopColor="#282050" />
                    </radialGradient>
                  </defs>
                  <path d="M0 0H220V28Q110 42 0 28Z" fill="url(#band)" />
                  <circle cx="162" cy="9" r="11" fill="#4a2a68" opacity="0.7" />
                  <path d="M130 35Q185 30 220 21V28Q180 33 130 35Z" fill="#8a7aa0" />
                </svg>
                <ThumbRule />
                <ThumbTag />
              </ThumbCard>
            </ThumbFrame>
          </ThumbRow>
        </Sidebar>

        <Work>
          <Stage>
            <SlideSheet>
              <SlidePicture>
                <SlideTitle>Sales Campaign</SlideTitle>
                <SlideSubtitle>RETAIL PROMOTION FOR INCREASING STORE SALES</SlideSubtitle>
              </SlidePicture>
              <SlideTag />
              <Arrows viewBox="409 265 1559 878">
                <g stroke="#fff" strokeWidth="17" fill="none">
                  <path d="M1619 989 1302 830" />
                  <path d="M1621 979 1306 916" />
                </g>
                <g stroke="#fff" strokeWidth="18" fill="none" strokeLinecap="round" strokeLinejoin="round">
                  <path d="M1354 821 1303 831 1327 877" />
                  <path d="M1352 895 1307 917 1341 954" />
                </g>
              </Arrows>
            </SlideSheet>
          </Stage>
          <NotesBar>Click to add notes</NotesBar>
        </Work>
      </Main>

      <StatusBar>
        <StatusSpacer $w={39} />
        <StatusText $w={133}>Slide 1 of 2</StatusText>
        <StatusText $w={239}>English (United States)</StatusText>
        <StatusText $w={762}>
          <AccessIcon />
          Accessibility: Investigate
        </StatusText>
        <StatusText $w={113}>
          <NotesIcon />
          Notes
        </StatusText>
        <StatusText $w={142}>
          <CommentFill />
          Comments
        </StatusText>
        <ViewButton $w={58} $active>
          <NormalViewIcon />
        </ViewButton>
        <ViewButton $w={58}>
          <SorterIcon />
        </ViewButton>
        <ViewButton $w={58}>
          <ReadingIcon />
        </ViewButton>
        <ViewButton $w={58}>
          <PresentIcon />
        </ViewButton>
        <StatusSpacer $w={9} />
        <ZoomSign>−</ZoomSign>
        <ZoomTrack>
          <ZoomThumb />
        </ZoomTrack>
        <ZoomSign>+</ZoomSign>
        <StatusSpacer $w={27} />
        <StatusText $w={83}>102%</StatusText>
        <FitIcon />
      </StatusBar>
    </Page>
  );
}
